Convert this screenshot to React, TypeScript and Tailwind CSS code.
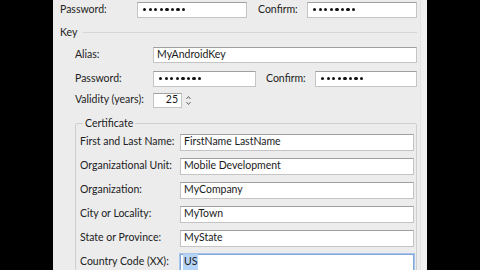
import React from "react";

const font = { fontFamily: 'Lato, "Noto Sans", sans-serif' };

function Input({ value, className = "", focused = false, selected = false, right = false }: { value: string; className?: string; focused?: boolean; selected?: boolean; right?: boolean }) {
  return (
    <div
      className={
        "h-full bg-white flex items-center px-[3px] text-[10.5px] text-[#1a1a1a] border " +
        (focused
          ? "border-[#7fa7d9] shadow-[0_0_0_1px_#a9c6ea] "
          : "border-[#c4c4c4] border-t-[#a0a0a0] ") +
        (right ? "justify-end " : "") +
        className
      }
    >
      <span className={selected ? "bg-[#b6d4f5] px-[1px] -ml-[1px]" : ""}>{value}</span>
    </div>
  );
}

function Dots({ className = "" }: { className?: string }) {
  return (
    <div className={"h-full bg-white flex items-center gap-[2.4px] px-[5px] border border-[#c4c4c4] border-t-[#a0a0a0] " + className}>
      {Array.from({ length: 8 }).map((_, i) => (
        <div key={i} className="w-[3.2px] h-[3.2px] rounded-full bg-[#111]" />
      ))}
    </div>
  );
}

function Label({ children, className = "" }: { children: React.ReactNode; className?: string }) {
  return <div className={"shrink-0 text-[10.5px] text-[#222] whitespace-nowrap " + className}>{children}</div>;
}

export default function App() {
  const cert: [string, string][] = [
    ["First and Last Name:", "FirstName LastName"],
    ["Organizational Unit:", "Mobile Development"],
    ["Organization:", "MyCompany"],
    ["City or Locality:", "MyTown"],
    ["State or Province:", "MyState"],
  ];
  return (
    <div className="w-[480px] h-[270px] bg-black flex overflow-hidden" style={font}>
      <div className="ml-[53px] w-[374px] h-full bg-[#ececec] flex">
        <div className="flex-1 flex flex-col pt-[2px] pl-[7px] pr-[3px]">
          {/* Row 1 */}
          <div className="h-[16px] flex items-center">
            <Label className="w-[77px]">Password:</Label>
            <Dots className="w-[110px]" />
            <Label className="ml-[11px] w-[49px]">Confirm:</Label>
            <Dots className="flex-1" />
          </div>
          {/* Key header */}
          <div className="mt-[8px] h-[14px] flex items-center">
            <Label>Key</Label>
            <div className="flex-1 ml-[6px] h-[2px] border-t border-[#d6d6d6] border-b-white" />
          </div>
          <div className="pl-[15px] flex flex-col">
            <div className="mt-[7px] h-[16px] flex items-center">
              <Label className="w-[78px]">Alias:</Label>
              <Input value="MyAndroidKey" className="flex-1" />
            </div>
            <div className="mt-[8px] h-[16px] flex items-center">
              <Label className="w-[78px]">Password:</Label>
              <Dots className="w-[103px]" />
              <Label className="ml-[10px] w-[49px]">Confirm:</Label>
              <Dots className="flex-1" />
            </div>
            <div className="mt-[6px] h-[15px] flex items-center">
              <Label className="w-[78px]">Validity (years):</Label>
              <Input value="25" right className="w-[29px]" />
              <div className="ml-[2px] w-[9px] h-[15px] flex items-center justify-center">
                <svg width="7" height="13" viewBox="0 0 7 13">
                  <path d="M1.5 5 L3.5 2.5 L5.5 5" fill="none" stroke="#666" strokeWidth="1" />
                  <path d="M1.5 8 L3.5 10.5 L5.5 8" fill="none" stroke="#666" strokeWidth="1" />
                </svg>
              </div>
            </div>
            <fieldset className="mt-[9px] border border-[#cfcfcf] rounded-[2px] pl-[4px] pr-[2px] flex flex-col">
              <legend className="ml-[3px] px-[2px] text-[10.5px] text-[#222] leading-[13px]">Certificate</legend>
              <div className="mt-[4px] flex flex-col gap-[7px]">
                {cert.map(([l, v]) => (
                  <div key={l} className="h-[17px] flex items-center">
                    <Label className="w-[100px]">{l}</Label>
                    <Input value={v} className="flex-1" />
                  </div>
                ))}
                <div className="h-[17px] flex items-center">
                  <Label className="w-[100px]">Country Code (XX):</Label>
                  <Input value="US" focused selected className="flex-1" />
                </div>
              </div>
            </fieldset>
          </div>
        </div>
        <div className="w-[7px] h-full bg-[#f0f0f0] border-l border-[#e4e4e4]" />
      </div>
    </div>
  );
}
